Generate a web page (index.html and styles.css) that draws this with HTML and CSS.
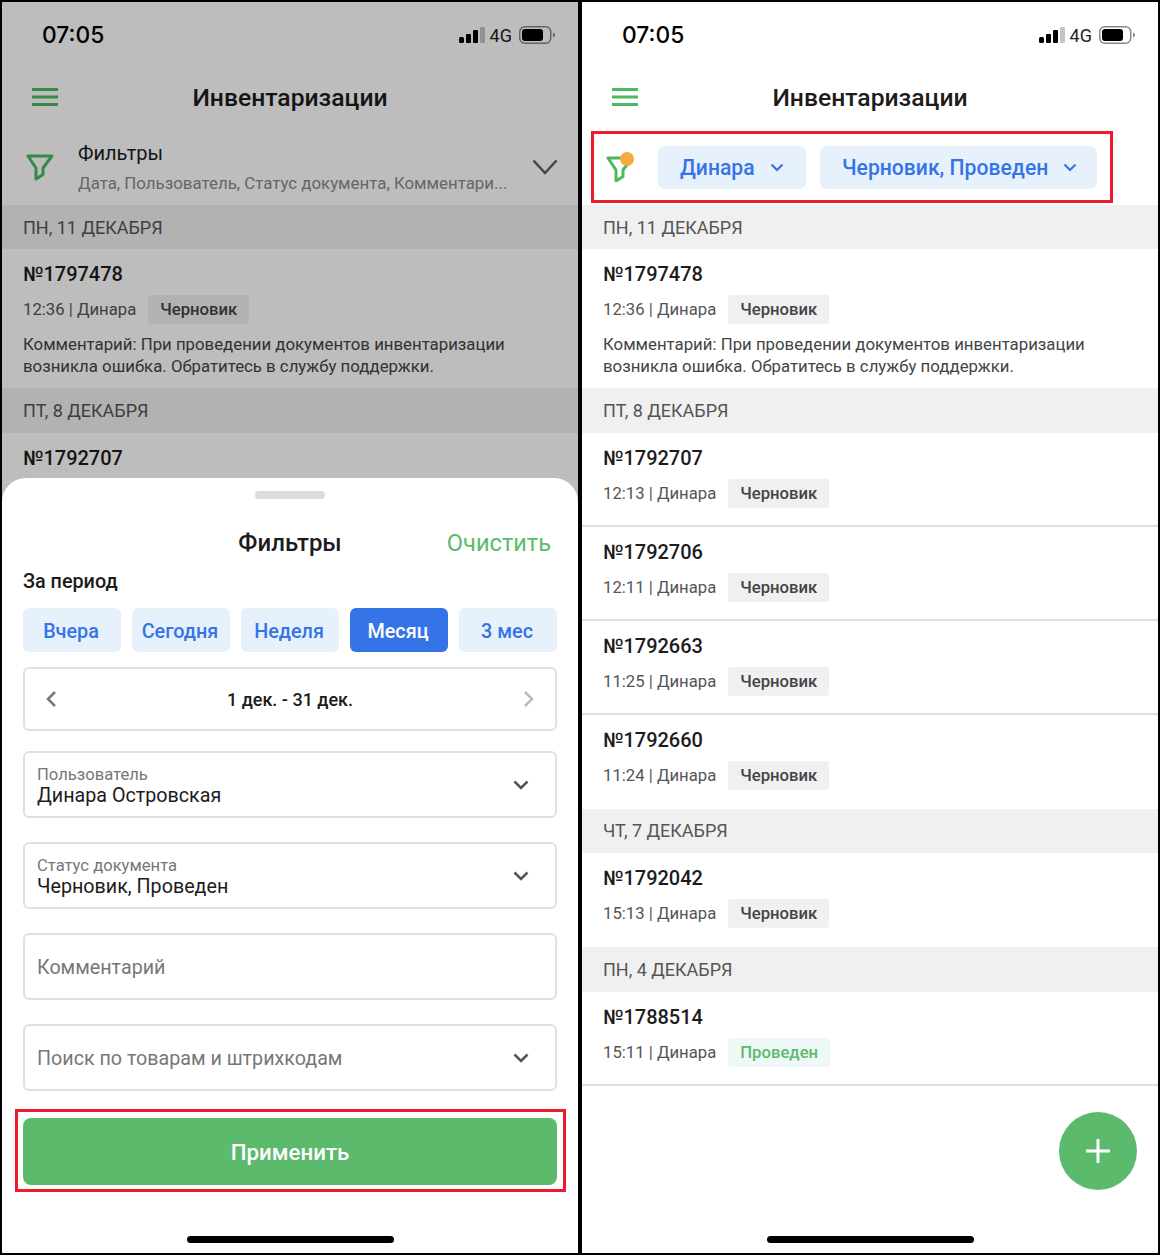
FILE: index.html
```html
<!DOCTYPE html>
<html lang="ru">

<head>
  <meta charset="UTF-8">
  <title>Инвентаризации</title>
  <link rel="stylesheet" href="styles.css">
</head>

<body>
  <!-- левый экран: шторка фильтров -->
  <div class="screen">
    <div class="status-bar">
      <span class="time">07:05</span>
      <div class="status-icons">
        <svg class="signal" viewBox="0 0 26 16"><rect x="0" y="10" width="5" height="6" rx="1.5" fill="#000"/><rect x="7" y="7" width="5" height="9" rx="1" fill="#000"/><rect x="14" y="3" width="5" height="13" rx="1" fill="#000"/><rect x="21" y="0" width="5" height="16" rx="1" fill="#c4c4c4"/></svg>
        <span class="net">4G</span>
        <svg class="battery" viewBox="0 0 36 18"><rect x="0.75" y="0.75" width="31" height="16.5" rx="5" fill="none" stroke="#888" stroke-width="1.5"/><rect x="3" y="3" width="21" height="12" rx="3" fill="#000"/><path d="M34 6.5c1.5.5 2 1.5 2 2.5s-.5 2-2 2.500z" fill="#888"/></svg>
      </div>
    </div>
    <div class="nav">
      <svg class="burger" viewBox="0 0 26 18"><path d="M0 1.500H26M0 9H26M0 16.500H26" stroke="#4cb860" stroke-width="3"/></svg>
      <h1>Инвентаризации</h1>
    </div>
    <div class="filter-summary">
      <svg class="funnel" viewBox="0 0 28 27"><path d="M2 2H26L17 14V20.500L10 25V14Z" fill="none" stroke="#4cb860" stroke-width="3" stroke-linejoin="round"/></svg>
      <div class="filter-text">
        <div class="filter-title">Фильтры</div>
        <div class="filter-sub">Дата, Пользователь, Статус документа, Комментари...</div>
      </div>
      <svg class="big-chevron" viewBox="0 0 26 16"><path d="M1.500 1.500L13 14L24.500 1.500" fill="none" stroke="#5d5d5d" stroke-width="2.500"/></svg>
    </div>
    <div class="day">ПН, 11 ДЕКАБРЯ</div>
    <div class="doc doc-comment">
      <div class="doc-num">№1797478</div>
      <div class="doc-meta">12:36 | Динара <span class="tag">Черновик</span></div>
      <p class="comment">Комментарий: При проведении документов инвентаризации возникла ошибка. Обратитесь в службу поддержки.</p>
    </div>
    <div class="day">ПТ, 8 ДЕКАБРЯ</div>
    <div class="doc">
      <div class="doc-num">№1792707</div>
    </div>

    <div class="dim"></div>
    <div class="sheet">
      <div class="handle"></div>
      <div class="sheet-head">
        <h2>Фильтры</h2>
        <span class="clear">Очистить</span>
      </div>
      <div class="period-label">За период</div>
      <div class="periods">
        <div class="period">Вчера</div>
        <div class="period">Сегодня</div>
        <div class="period">Неделя</div>
        <div class="period active">Месяц</div>
        <div class="period">3 мес</div>
      </div>
      <div class="date-box">
        <svg class="arrow" viewBox="0 0 12 18"><path d="M10 2L3 9L10 16" fill="none" stroke="#777" stroke-width="2.500"/></svg>
        <span>1 дек. - 31 дек.</span>
        <svg class="arrow" viewBox="0 0 12 18"><path d="M2 2L9 9L2 16" fill="none" stroke="#bbb" stroke-width="2.500"/></svg>
      </div>
      <div class="field first">
        <div class="field-text">
          <div class="field-label">Пользователь</div>
          <div class="field-value">Динара Островская</div>
        </div>
        <svg class="chevron" viewBox="0 0 16 10"><path d="M1.500 1.500L8 8L14.500 1.500" fill="none" stroke="#555" stroke-width="2.600"/></svg>
      </div>
      <div class="field">
        <div class="field-text">
          <div class="field-label">Статус документа</div>
          <div class="field-value">Черновик, Проведен</div>
        </div>
        <svg class="chevron" viewBox="0 0 16 10"><path d="M1.500 1.500L8 8L14.500 1.500" fill="none" stroke="#555" stroke-width="2.600"/></svg>
      </div>
      <div class="field">
        <div class="field-holder">Комментарий</div>
      </div>
      <div class="field">
        <div class="field-holder">Поиск по товарам и штрихкодам</div>
        <svg class="chevron" viewBox="0 0 16 10"><path d="M1.500 1.500L8 8L14.500 1.500" fill="none" stroke="#555" stroke-width="2.600"/></svg>
      </div>
      <div class="apply-mark">
        <div class="apply">Применить</div>
      </div>
    </div>
    <div class="home-bar"></div>
  </div>

  <!-- правый экран: список -->
  <div class="screen">
    <div class="status-bar">
      <span class="time">07:05</span>
      <div class="status-icons">
        <svg class="signal" viewBox="0 0 26 16"><rect x="0" y="10" width="5" height="6" rx="1.5" fill="#000"/><rect x="7" y="7" width="5" height="9" rx="1" fill="#000"/><rect x="14" y="3" width="5" height="13" rx="1" fill="#000"/><rect x="21" y="0" width="5" height="16" rx="1" fill="#c4c4c4"/></svg>
        <span class="net">4G</span>
        <svg class="battery" viewBox="0 0 36 18"><rect x="0.75" y="0.75" width="31" height="16.5" rx="5" fill="none" stroke="#888" stroke-width="1.5"/><rect x="3" y="3" width="21" height="12" rx="3" fill="#000"/><path d="M34 6.5c1.5.5 2 1.5 2 2.5s-.5 2-2 2.500z" fill="#888"/></svg>
      </div>
    </div>
    <div class="nav">
      <svg class="burger" viewBox="0 0 26 18"><path d="M0 1.500H26M0 9H26M0 16.500H26" stroke="#4cb860" stroke-width="3"/></svg>
      <h1>Инвентаризации</h1>
    </div>
    <div class="chips-row">
      <div class="chips-mark">
        <svg class="funnel-dot" viewBox="0 0 30 30"><path d="M2 6H26L17 18V24.500L10 29V18Z" fill="none" stroke="#4cb860" stroke-width="3" stroke-linejoin="round"/><circle cx="21" cy="7" r="7" fill="#f5ac3f"/></svg>
        <div class="chip chip-user">Динара <svg viewBox="0 0 14 9"><path d="M1.500 1.500L7 7L12.500 1.500" fill="none" stroke="#3574e6" stroke-width="2.200"/></svg></div>
        <div class="chip chip-status">Черновик, Проведен <svg viewBox="0 0 14 9"><path d="M1.500 1.500L7 7L12.500 1.500" fill="none" stroke="#3574e6" stroke-width="2.200"/></svg></div>
      </div>
    </div>
    <div class="day">ПН, 11 ДЕКАБРЯ</div>
    <div class="doc doc-comment">
      <div class="doc-num">№1797478</div>
      <div class="doc-meta">12:36 | Динара <span class="tag">Черновик</span></div>
      <p class="comment">Комментарий: При проведении документов инвентаризации возникла ошибка. Обратитесь в службу поддержки.</p>
    </div>
    <div class="day">ПТ, 8 ДЕКАБРЯ</div>
    <div class="doc line">
      <div class="doc-num">№1792707</div>
      <div class="doc-meta">12:13 | Динара <span class="tag">Черновик</span></div>
    </div>
    <div class="doc line">
      <div class="doc-num">№1792706</div>
      <div class="doc-meta">12:11 | Динара <span class="tag">Черновик</span></div>
    </div>
    <div class="doc line">
      <div class="doc-num">№1792663</div>
      <div class="doc-meta">11:25 | Динара <span class="tag">Черновик</span></div>
    </div>
    <div class="doc">
      <div class="doc-num">№1792660</div>
      <div class="doc-meta">11:24 | Динара <span class="tag">Черновик</span></div>
    </div>
    <div class="day">ЧТ, 7 ДЕКАБРЯ</div>
    <div class="doc">
      <div class="doc-num">№1792042</div>
      <div class="doc-meta">15:13 | Динара <span class="tag">Черновик</span></div>
    </div>
    <div class="day">ПН, 4 ДЕКАБРЯ</div>
    <div class="doc line">
      <div class="doc-num">№1788514</div>
      <div class="doc-meta">15:11 | Динара <span class="tag tag-done">Проведен</span></div>
    </div>

    <div class="fab">
      <svg viewBox="0 0 24 24"><path d="M12 1V23M1 12H23" stroke="#fff" stroke-width="3" stroke-linecap="round"/></svg>
    </div>
    <div class="home-bar"></div>
  </div>
</body>

</html>
```

FILE: styles.css
```css
* {
  box-sizing: border-box;
}

body {
  margin: 0;
  width: 1160px;
  height: 1255px;
  padding: 2px;
  display: flex;
  gap: 4px;
  background: #000;
  font-family: Roboto, sans-serif;
  color: #1c1c1c;
  overflow: hidden;
}

.screen {
  width: 576px;
  height: 1251px;
  position: relative;
  overflow: hidden;
  background: #fff;
}

.status-bar {
  height: 64px;
  padding: 2px 23px 0 40px;
  display: flex;
  align-items: center;
  justify-content: space-between;
}

.time {
  margin-bottom: 2px;
  font-family: Inter, sans-serif;
  font-size: 22.800px;
  font-weight: 550;
  color: #000;
}

.status-icons {
  display: flex;
  align-items: center;
}

.signal {
  width: 26px;
  height: 16px;
}

.net {
  margin: 0 7px 0 5px;
  font-size: 18px;
  color: #222;
}

.battery {
  width: 36px;
  height: 18px;
}

.nav {
  height: 64px;
  padding-bottom: 2px;
  position: relative;
  display: flex;
  align-items: center;
  justify-content: center;
}

.burger {
  position: absolute;
  left: 30px;
  top: 22px;
  width: 26px;
  height: 18px;
}

h1 {
  margin: 0;
  font-size: 24.700px;
  font-weight: 500;
}

.filter-summary {
  height: 75px;
  padding: 0 20px 0 24px;
  display: flex;
  align-items: center;
}

.funnel {
  width: 28px;
  height: 27px;
}

.filter-text {
  flex: 1;
  margin-left: 24px;
}

.filter-title {
  font-size: 20px;
  line-height: 26px;
  margin-bottom: 6px;
  margin-top: -1px;
}

.filter-sub {
  font-size: 16.850px;
  line-height: 22px;
  color: #8a8a8a;
}

.big-chevron {
  width: 26px;
  height: 16px;
  margin-bottom: 2px;
}

.chips-row {
  height: 75px;
  padding: 1px 0 0 9px;
}

.chips-mark {
  width: 522px;
  height: 72px;
  padding-left: 12px;
  display: flex;
  align-items: center;
  border: 3px solid #ee1b2c;
}

.funnel-dot {
  width: 30px;
  height: 30px;
  margin-right: 22px;
  flex: none;
}

.chip {
  flex: none;
  height: 43px;
  padding: 0 22px;
  margin-right: 14px;
  display: flex;
  align-items: center;
  border-radius: 7px;
  background: #e7f1fc;
  color: #3574e6;
  font-size: 21.150px;
  font-weight: 500;
  white-space: nowrap;
}

.chip svg {
  flex: none;
  width: 14px;
  height: 9px;
  margin-left: 15px;
}

.chip-user {
  width: 148px;
}

.chip-status {
  width: 277px;
}

.day {
  height: 44.400px;
  padding-left: 21px;
  display: flex;
  align-items: center;
  background: #f0f0f0;
  color: #555;
  font-size: 18px;
}

.doc {
  height: 94px;
  padding: 12px 21px 0;
}

.doc-comment {
  height: 139px;
}

.line {
  border-bottom: 2px solid #dedede;
}

.doc-num {
  font-size: 20px;
  font-weight: 500;
  line-height: 26px;
}

.doc-meta {
  margin-top: 8px;
  display: flex;
  align-items: center;
  color: #555;
  font-size: 16.700px;
}

.tag {
  height: 29px;
  padding: 0 12px;
  margin-left: 12px;
  display: flex;
  align-items: center;
  border-radius: 3px;
  background: #f0f0f0;
  color: #444;
  font-weight: 500;
}

.tag-done {
  background: #eef8f6;
  color: #5cba6c;
}

.comment {
  margin: 9px 0 0;
  font-size: 16.800px;
  line-height: 22px;
  color: #444;
}

.dim {
  position: absolute;
  inset: 0;
  background: rgba(0, 0, 0, 0.26);
}

.sheet {
  position: absolute;
  left: 0;
  right: 0;
  top: 476px;
  bottom: 0;
  padding: 13px 21px 0;
  border-radius: 24px 24px 0 0;
  background: #fff;
}

.handle {
  width: 70px;
  height: 8px;
  margin: 0 auto;
  border-radius: 4px;
  background: #dcdcdc;
}

.sheet-head {
  height: 30px;
  margin-top: 29px;
  position: relative;
  text-align: center;
}

h2 {
  margin: 0;
  font-size: 24px;
  line-height: 30px;
  font-weight: 500;
}

.clear {
  position: absolute;
  right: 6px;
  top: 0;
  font-size: 23.600px;
  line-height: 30px;
  color: #5cba6c;
}

.period-label {
  margin-top: 11px;
  font-size: 19.800px;
  line-height: 26px;
  font-weight: 500;
}

.periods {
  margin-top: 13px;
  display: grid;
  grid-template-columns: repeat(5, 1fr);
  gap: 11px;
}

.period {
  height: 44px;
  padding: 2px 2px 0 0;
  display: flex;
  align-items: center;
  justify-content: center;
  border-radius: 6px;
  background: #e7f1fc;
  color: #3574e6;
  font-size: 19.800px;
  font-weight: 500;
}

.period.active {
  background: #3574e6;
  color: #fff;
}

.date-box {
  height: 64px;
  margin-top: 15px;
  padding: 0 20px;
  display: flex;
  align-items: center;
  justify-content: space-between;
  border: 2px solid #e0e0e0;
  border-radius: 6px;
  font-size: 18px;
  font-weight: 500;
}

.arrow {
  width: 12px;
  height: 18px;
}

.field {
  height: 67px;
  margin-top: 24px;
  padding: 0 26px 0 12px;
  display: flex;
  align-items: center;
  justify-content: space-between;
  border: 2px solid #e0e0e0;
  border-radius: 6px;
}

.field.first {
  margin-top: 20px;
}

.field-text,
.field-holder {
  padding-top: 2px;
}

.field-label {
  font-size: 16.600px;
  line-height: 20px;
  color: #777;
}

.field-value {
  font-size: 19.700px;
  line-height: 22px;
}

.field-holder {
  font-size: 19.700px;
  color: #777;
}

.chevron {
  width: 16px;
  height: 10px;
}

.apply-mark {
  margin: 18px -9px 0 -8px;
  padding: 6px 6px 4px 5px;
  border: 3px solid #ee1b2c;
}

.apply {
  height: 67px;
  display: flex;
  align-items: center;
  justify-content: center;
  border-radius: 8px;
  background: #5cba6c;
  color: #fff;
  font-size: 22.300px;
  font-weight: 500;
}

.fab {
  position: absolute;
  left: 477px;
  top: 1110px;
  width: 78px;
  height: 78px;
  display: flex;
  align-items: center;
  justify-content: center;
  border-radius: 50%;
  background: #5cba6c;
}

.fab svg {
  width: 24px;
  height: 24px;
}

.home-bar {
  position: absolute;
  left: 185px;
  bottom: 10px;
  width: 207px;
  height: 7px;
  border-radius: 4px;
  background: #000;
}
```
